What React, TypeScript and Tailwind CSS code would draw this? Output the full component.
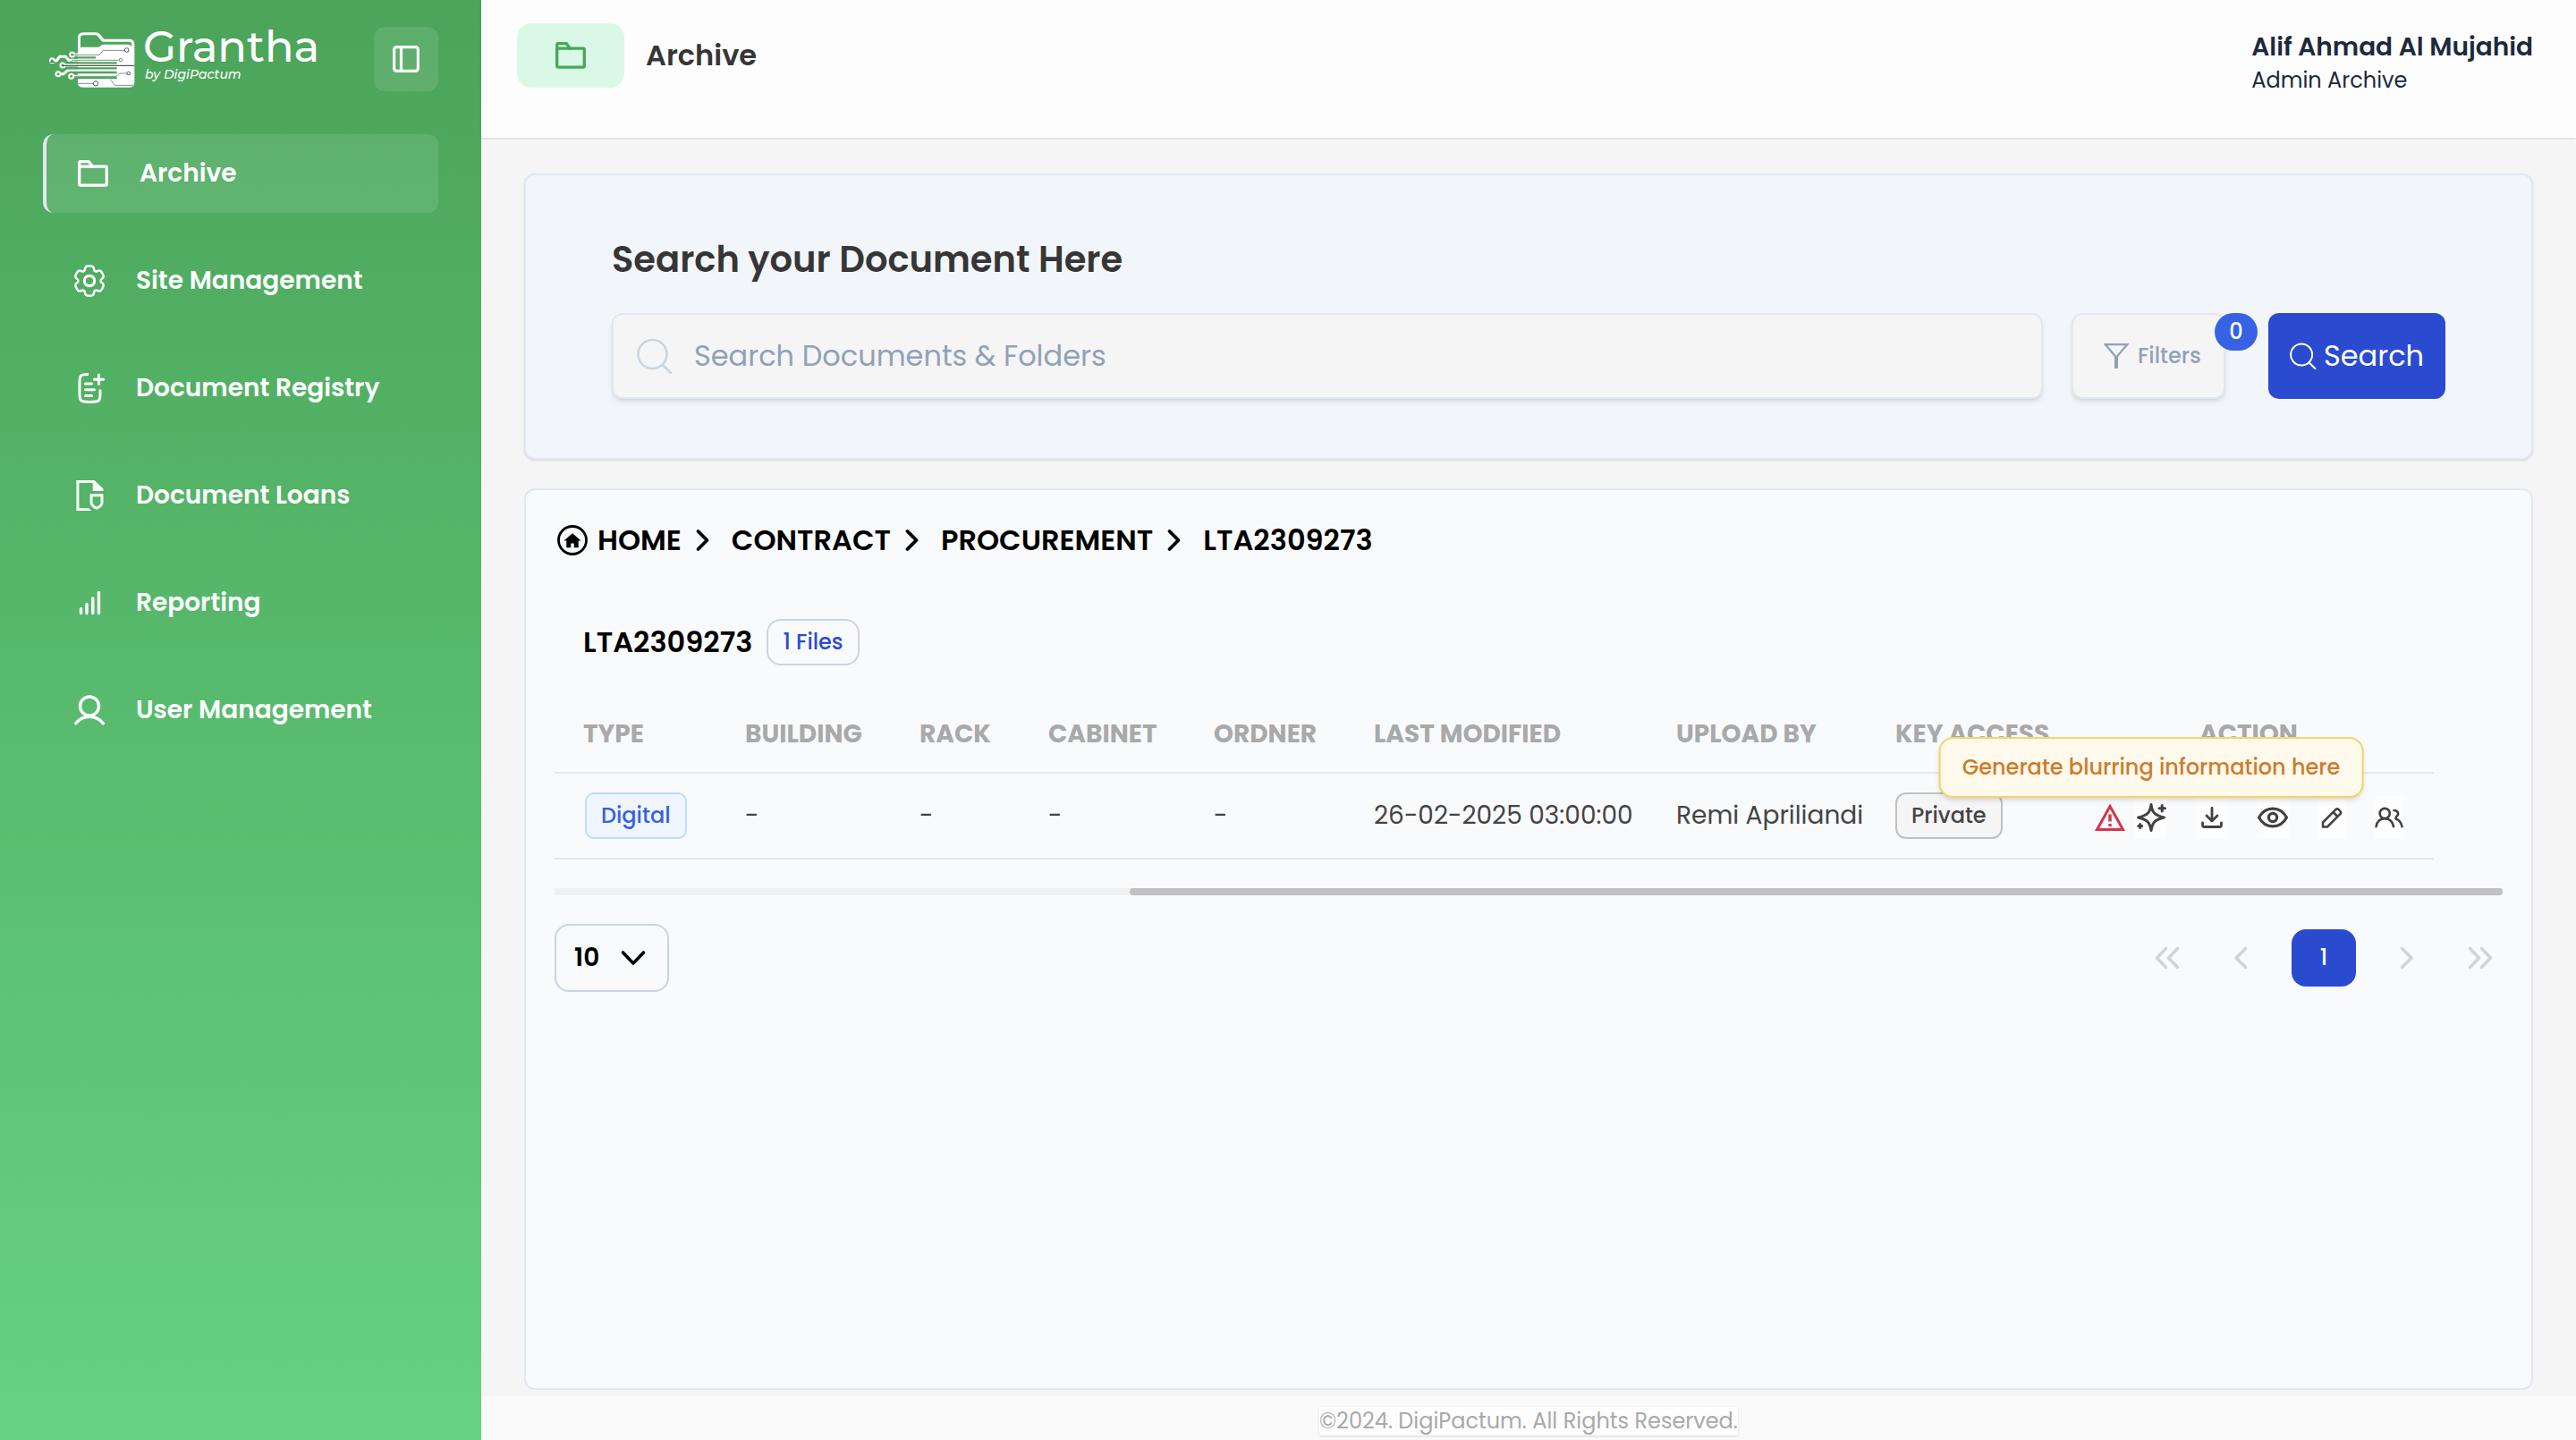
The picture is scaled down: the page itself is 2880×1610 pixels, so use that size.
import type { ReactNode } from "react";

type IconProps = { children: ReactNode; box: string; className: string; width?: number };

function Icon({ children, box, className, width = 3 }: IconProps) {
  return (
    <svg
      viewBox={box}
      className={className}
      fill="none"
      stroke="currentColor"
      strokeWidth={width}
      strokeLinecap="round"
      strokeLinejoin="round"
      aria-hidden="true"
    >
      {children}
    </svg>
  );
}

function FolderIcon({ className }: { className: string }) {
  return (
    <Icon box="-3 -5 40 40" className={className} width={3.3}>
      <path d="M1.7 8V3.4Q1.7 1.7 3.4 1.7H12.3L16.4 7.2" />
      <rect x="1.7" y="7.2" width="30.6" height="21" rx="1.4" />
    </Icon>
  );
}

const GEAR =
  "M13.7654 2.15224C13.3978 2 12.9319 2 12 2C11.0681 2 10.6022 2 10.2346 2.15224C9.74457 2.35523 9.35522 2.74458 9.15223 3.23463C9.05957 3.45834 9.0233 3.7185 9.00911 4.09799C8.98826 4.65568 8.70226 5.17189 8.21894 5.45093C7.73564 5.72996 7.14559 5.71954 6.65219 5.45876C6.31645 5.2813 6.07301 5.18262 5.83294 5.15102C5.30704 5.08178 4.77518 5.22429 4.35436 5.5472C4.03874 5.78938 3.80577 6.1929 3.33983 6.99993C2.87389 7.80697 2.64092 8.21048 2.58899 8.60491C2.51976 9.1308 2.66227 9.66266 2.98518 10.0835C3.13256 10.2756 3.3397 10.437 3.66119 10.639C4.1338 10.936 4.43789 11.4419 4.43786 12C4.43783 12.5581 4.13375 13.0639 3.66118 13.3608C3.33965 13.5629 3.13248 13.7244 2.98508 13.9165C2.66217 14.3373 2.51966 14.8691 2.5889 15.395C2.64082 15.7894 2.87379 16.193 3.33973 17C3.80568 17.807 4.03865 18.2106 4.35426 18.4527C4.77508 18.7756 5.30694 18.9181 5.83284 18.8489C6.07289 18.8173 6.31632 18.7186 6.65204 18.5412C7.14547 18.2804 7.73556 18.27 8.2189 18.549C8.70224 18.8281 8.98826 19.3443 9.00911 19.9021C9.02331 20.2815 9.05957 20.5417 9.15223 20.7654C9.35522 21.2554 9.74457 21.6448 10.2346 21.8478C10.6022 22 11.0681 22 12 22C12.9319 22 13.3978 22 13.7654 21.8478C14.2554 21.6448 14.6448 21.2554 14.8477 20.7654C14.9404 20.5417 14.9767 20.2815 14.9909 19.902C15.0117 19.3443 15.2977 18.8281 15.781 18.549C16.2643 18.2699 16.8544 18.2804 17.3479 18.5412C17.6836 18.7186 17.927 18.8172 18.167 18.8488C18.6929 18.9181 19.2248 18.7756 19.6456 18.4527C19.9612 18.2105 20.1942 17.807 20.6601 16.9999C21.1261 16.1929 21.3591 15.7894 21.411 15.395C21.4802 14.8691 21.3377 14.3372 21.0148 13.9164C20.8674 13.7243 20.6602 13.5628 20.3387 13.3608C19.8662 13.0639 19.5621 12.558 19.5621 11.9999C19.5621 11.4418 19.8662 10.9361 20.3387 10.6392C20.6603 10.4371 20.8675 10.2757 21.0149 10.0835C21.3378 9.66273 21.4803 9.13087 21.4111 8.60497C21.3592 8.21055 21.1262 7.80703 20.6602 7C20.1943 6.19297 19.9613 5.78945 19.6457 5.54727C19.2249 5.22436 18.693 5.08185 18.1671 5.15109C17.9271 5.18269 17.6837 5.28136 17.3479 5.4588C16.8545 5.71959 16.2644 5.73002 15.7811 5.45096C15.2977 5.17191 15.0117 4.65566 14.9909 4.09794C14.9767 3.71848 14.9404 3.45833 14.8477 3.23463C14.6448 2.74458 14.2554 2.35523 13.7654 2.15224Z";

function Logo() {
  return (
    <svg viewBox="0 0 330 225" className="h-[75px] w-[110px] shrink-0" fill="none" aria-hidden="true">
      <path
        fillRule="evenodd"
        fill="#fff"
        d="M111 90V40Q111 22 129 22H172Q180 22 185 28L199 44H284Q301 44 301 61V190Q301 206 285 206H127Q111 206 111 190ZM120 73L124 71H178Q184 71 188 67L192 63Q194 62 200 62H282L292 68V62Q292 53 282 53H196Q192 53 189 49L177 34Q175 31 170 31H130Q120 31 120 41Z"
      />
      <g stroke="#fff" strokeWidth="9">
        <path d="M92 96H116M30 116H40L50 103H70L80 115H116M60 132H116M45 161H63L77 149H116M89 169H116" />
      </g>
      <g stroke="#4ca65c" strokeWidth="7">
        <path d="M98 106H172M108 124H242M70 142H242M82 156H242M100 174H242" />
      </g>
      <g stroke="#fff" strokeWidth="6" fill="#4ca65c">
        <circle cx="92" cy="96" r="7.5" />
        <circle cx="25" cy="116" r="7.5" />
        <circle cx="60" cy="132" r="7.5" />
        <circle cx="45" cy="161" r="7.5" />
        <circle cx="89" cy="169" r="7.5" />
      </g>
      <g stroke="#8b8b8b" strokeWidth="3">
        <path d="M90 97H183L196 82H267M88 119L92 115H248M100 169H240L252 159H275M112 193H163M222 181L235 199H298" />
        <circle cx="275" cy="81" r="7" stroke="#555" />
        <circle cx="255" cy="114" r="5.5" />
        <circle cx="281" cy="159" r="5.5" stroke="#555" />
        <circle cx="171" cy="193" r="8" stroke="#555" />
      </g>
      <path d="M60 133H301M17 121H33" stroke="#333" strokeWidth="3" />
    </svg>
  );
}

const NAV: { label: string; icon: ReactNode; active?: boolean }[] = [
  { label: "Archive", active: true, icon: <FolderIcon className="size-10" /> },
  {
    label: "Site Management",
    icon: (
      <Icon box="0 0 24 24" className="size-10" width={1.5}>
        <circle cx="12" cy="12" r="3.4" strokeWidth="1.9" />
        <path d={GEAR} />
      </Icon>
    ),
  },
  {
    label: "Document Registry",
    icon: (
      <Icon box="0 0 40 40" className="size-10" width={3}>
        <path strokeLinecap="butt" d="M19 4.5C10.5 4.5 9 5.5 9 13V27C9 34.5 10.5 35.5 20.5 35.5S32 34.5 32 27V21.5" />
        <path d="M15.5 15H22.5M15.5 21.7H25.5M15.5 28.5H22.5M30.5 5V15.5M25.5 10.2H35.5" />
      </Icon>
    ),
  },
  {
    label: "Document Loans",
    icon: (
      <Icon box="0 0 40 40" className="size-10" width={3}>
        <g strokeLinecap="butt" strokeLinejoin="miter">
          <path d="M24 4.5H6.900V35.5H19.5" />
          <path d="M18 34L22.5 37H18Z" fill="currentColor" stroke="none" />
          <path d="M23.7 3H25.5L35.5 12.5V15H23.7Z" fill="currentColor" stroke="none" />
          <path d="M22.1 19.8H34V28Q34 31.5 28 34.2Q22.1 31.5 22.1 28Z" />
        </g>
      </Icon>
    ),
  },
  {
    label: "Reporting",
    icon: (
      <Icon box="0 0 40 40" className="size-10" width={3.4}>
        <path d="M10.5 26.8V31.5M17 21.5V31.5M23.8 15V31.5M30.5 8.5V31.5" />
      </Icon>
    ),
  },
  {
    label: "User Management",
    icon: (
      <Icon box="0 0 40 40" className="size-10" width={3.4}>
        <circle cx="20" cy="15.5" r="10.5" />
        <path d="M4.6 34.8Q11 27.3 20 27.3T35.4 34.8" />
      </Icon>
    ),
  },
];

function Sidebar() {
  return (
    <aside className="flex w-[538px] shrink-0 flex-col bg-linear-to-b from-[#4ba45a] to-[#66d283] text-white">
      <div className="flex h-[104px] items-center pt-7 pr-12 pl-[50px]">
        <Logo />
        <div className="self-start font-[Montserrat,Poppins,sans-serif]">
          <div className="text-[48px] leading-[48px] font-medium">Grantha</div>
          <div className="pl-[2px] text-[14px] leading-[14px] font-medium italic">by DigiPactum</div>
        </div>
        <button type="button" aria-label="Toggle sidebar" className="ml-auto flex size-[72px] items-center justify-center rounded-xl bg-white/10">
          <Icon box="0 0 30 30" className="size-[30px]" width={3.2}>
            <rect x="1.6" y="1.6" width="26.8" height="26.8" rx="3" />
            <path d="M9.5 2V28" />
          </Icon>
        </button>
      </div>
      <nav className="mt-[46px] flex flex-col gap-8 px-12">
        {NAV.map((n) => (
          <a
            key={n.label}
            href="#"
            aria-current={n.active ? "page" : undefined}
            className={
              n.active
                ? "flex h-[88px] items-center gap-8 rounded-xl border-l-4 border-slate-200 bg-white/10 pl-8 text-[28px] font-semibold"
                : "flex h-[88px] items-center gap-8 rounded-xl pl-8 text-[28px] font-semibold"
            }
          >
            {n.icon}
            {n.label}
          </a>
        ))}
      </nav>
    </aside>
  );
}

function SearchIcon({ className, width }: { className: string; width: number }) {
  return (
    <Icon box="0 0 40 40" className={className} width={width}>
      <circle cx="17.5" cy="18" r="16" />
      <path d="M29 30L38 39" />
    </Icon>
  );
}

function SearchPanel() {
  return (
    <section className="rounded-xl border-2 border-slate-200 bg-[#f2f5fa] px-24 pt-16 pb-[66px] shadow-sm">
      <h2 className="mb-[30px] text-[40px] leading-[60px] font-semibold text-[#363636]">Search your Document Here</h2>
      <form className="flex h-24">
        <label className="flex flex-1 items-center gap-6 rounded-xl border-2 border-slate-200 bg-[#f5f5f5] pl-[26px] shadow-md">
          <SearchIcon className="size-10 shrink-0 text-slate-300" width={2.6} />
          <input
            type="text"
            aria-label="Search Documents & Folders"
            placeholder="Search Documents & Folders"
            className="min-w-0 flex-1 bg-transparent text-[32px] outline-none placeholder:text-slate-400"
          />
        </label>
        <button
          type="button"
          className="relative ml-8 flex w-[172px] items-center gap-[10px] rounded-xl border-2 border-slate-200 bg-[#f5f5f5] pl-[34px] text-2xl font-medium text-slate-400 shadow-md"
        >
          <svg viewBox="0 0 28 28" className="size-7" fill="none" stroke="currentColor" aria-hidden="true">
            <path d="M1.8 1.2H26.2L14 15.5Z" strokeWidth="2.2" />
            <path d="M14 14V28" strokeWidth="4" />
          </svg>
          Filters
          <span className="absolute -top-[2px] -right-[38px] flex h-[42px] w-[48px] items-center justify-center rounded-full bg-[#3762e3] text-2xl font-medium text-white">
            0
          </span>
        </button>
        <button
          type="submit"
          className="ml-12 flex w-[198px] items-center justify-center gap-2 rounded-xl bg-[#2a4bd0] text-[32px] text-white"
        >
          <SearchIcon className="size-[30px]" width={2.6} />
          Search
        </button>
      </form>
    </section>
  );
}

function Breadcrumb() {
  return (
    <nav aria-label="Breadcrumb">
      <ol className="flex items-center text-[32px] leading-[48px] font-semibold text-black">
        {["HOME", "CONTRACT", "PROCUREMENT", "LTA2309273"].map((label, i) => (
          <li key={label} className="flex items-center">
            {i === 0 ? (
              <svg viewBox="-20 -20 40 40" className="mr-2 size-10" aria-hidden="true">
                <circle r="15.5" fill="none" stroke="currentColor" strokeWidth="2.8" />
                <path d="M0 -7.7L9.5 0.5H6.7V8.3H1.8V3.5H-1.8V8.3H-6.7V0.5H-9.5Z" fill="currentColor" />
              </svg>
            ) : (
              <Icon box="0 0 32 32" className="mr-4 ml-2 size-8" width={3.8}>
                <path d="M10.5 6L20.5 16L10.5 26" />
              </Icon>
            )}
            <a href="#">{label}</a>
          </li>
        ))}
      </ol>
    </nav>
  );
}

const COLUMNS: [string, string][] = [
  ["TYPE", "w-[181px]"],
  ["BUILDING", "w-[195px]"],
  ["RACK", "w-[144px]"],
  ["CABINET", "w-[185px]"],
  ["ORDNER", "w-[179px]"],
  ["LAST MODIFIED", "w-[338px]"],
  ["UPLOAD BY", "w-[245px]"],
  ["KEY ACCESS", "w-[220px]"],
];

function IconButton({ label, wide, children }: { label: string; wide?: boolean; children: ReactNode }) {
  return (
    <button
      type="button"
      aria-label={label}
      className={wide ? "flex h-12 w-9 items-center justify-center bg-[#fdfdfd]" : "flex h-12 w-8 items-center justify-center bg-[#fdfdfd]"}
    >
      {children}
    </button>
  );
}

function RowActions() {
  return (
    <div className="flex items-center justify-center gap-8 pt-1 text-[#424242]">
      <div className="flex items-center gap-[10px]">
        <svg viewBox="0 0 36 36" className="size-9 text-[#d5344b]" fill="none" stroke="currentColor" strokeWidth="3" aria-hidden="true">
          <path d="M18 5.5L32.5 31.5H3.5Z" />
          <path d="M18 14.5V22.5M18 25V28" strokeWidth="3.4" />
        </svg>
        <div className="relative flex">
          <IconButton label="Generate blurring information" wide>
            <Icon box="0 0 36 36" className="size-9" width={3}>
              <path d="M18 3.5C19 12 21.5 15.5 32.5 18C21.5 20.5 19.5 24 18 32.5C16.5 24 14.5 20.5 3.5 18C14.5 15.5 17 12 18 3.5Z" />
              <path d="M30.2 4.5V11M27 7.7H33.5M5.7 25.5V29.5M3.7 27.5H7.7" />
            </Icon>
          </IconButton>
          <div
            role="tooltip"
            className="absolute bottom-[46px] left-1/2 -translate-x-1/2 rounded-2xl border-2 border-[#f5d565] bg-[#fffaeb] px-6 py-[14px] text-2xl leading-9 font-medium whitespace-nowrap text-[#cd7c2c] shadow-md"
          >
            Generate blurring information here
          </div>
        </div>
      </div>
      <IconButton label="Download" wide>
        <Icon box="-18 -18 36 36" className="size-9" width={2.8}>
          <path d="M0 -10.5V3.5M-6 -2L0 4L6 -2M-10.5 6V8.5Q-10.5 10.5 -8.5 10.5H8.5Q10.5 10.5 10.5 8.5V6" />
        </Icon>
      </IconButton>
      <IconButton label="Preview" wide>
        <Icon box="-18 -18 36 36" className="size-9" width={3.2}>
          <path d="M-15.5 0C-12 -6.5 -6.5 -9.8 0 -9.8S12 -6.5 15.5 0C12 6.5 6.5 9.8 0 9.8S-12 6.5 -15.5 0Z" />
          <circle r="4.6" />
        </Icon>
      </IconButton>
      <IconButton label="Edit">
        <Icon box="-16 -16 32 32" className="size-8" width={2.5}>
          <path d="M-10 10.5V5.5L4.3 -8.8Q6 -10.5 7.7 -8.8L9.3 -7.2Q11 -5.5 9.3 -3.8L-5 10.5ZM1.5 -6L6.5 -1" />
        </Icon>
      </IconButton>
      <IconButton label="Share">
        <Icon box="-16 -16 32 32" className="size-8" width={2.6}>
          <circle cx="-4.8" cy="-4.5" r="5.6" />
          <path d="M-14.5 10.2C-13.5 4.5 -10 1.2 -4.8 1.2S4 4.5 5 10.2M5.5 -8C10.5 -8 11.5 -3 8 -0.8L7.5 1.5C11.5 2.5 13.5 5.5 14.5 10.2" />
        </Icon>
      </IconButton>
    </div>
  );
}

function FilesTable() {
  return (
    <div className="mt-[29px]">
      <table className="w-[2101px] table-fixed border-separate border-spacing-0 text-left text-[28px] leading-[42px] text-[#444]">
        <thead>
          <tr className="text-[#a9a9a9] [&>th]:border-b-2 [&>th]:border-slate-200 [&>th]:pt-[27px] [&>th]:pb-[21px] [&>th]:font-bold [&>th]:whitespace-nowrap">
            {COLUMNS.map(([label, width]) => (
              <th key={label} scope="col" className={`${width} pl-8`}>
                {label}
              </th>
            ))}
            <th scope="col" className="text-center">
              ACTION
            </th>
          </tr>
        </thead>
        <tbody>
          <tr className="h-24 [&>td]:border-b-2 [&>td]:border-slate-200 [&>td]:pl-8 [&>td]:whitespace-nowrap">
            <td>
              <span className="ml-[2px] inline-flex h-[52px] items-center rounded-[10px] border-2 border-blue-200 bg-blue-50 px-4 align-middle text-2xl font-medium text-[#3560e4]">
                Digital
              </span>
            </td>
            <td>-</td>
            <td>-</td>
            <td>-</td>
            <td>-</td>
            <td>26-02-2025 03:00:00</td>
            <td>Remi Apriliandi</td>
            <td>
              <span className="inline-flex h-[52px] items-center rounded-xl border-2 border-[#c0c0c0] bg-[#f5f5f5] px-4 align-middle text-2xl font-medium">
                Private
              </span>
            </td>
            <td className="pl-0!">
              <RowActions />
            </td>
          </tr>
        </tbody>
      </table>
      <div className="mt-8 flex h-2 justify-end bg-[#f1f1f1]">
        <div className="w-[70.5%] rounded-full bg-[#c1c1c1]" />
      </div>
    </div>
  );
}

function PageArrow({ label, d }: { label: string; d: string }) {
  return (
    <button type="button" aria-label={label} className="flex h-16 w-[50px] items-center justify-center text-[#cfd4dc]">
      <Icon box="-16 -16 32 32" className="size-8" width={3.6}>
        <path d={d} />
      </Icon>
    </button>
  );
}

function Pagination() {
  return (
    <div className="mt-8 flex items-center justify-between">
      <div className="relative">
        <select
          aria-label="Rows per page"
          defaultValue="10"
          className="h-[76px] w-32 appearance-none rounded-2xl border-2 border-slate-300 bg-transparent pl-5 text-[28px] font-semibold text-black"
        >
          <option>10</option>
          <option>25</option>
          <option>50</option>
        </select>
        <Icon box="-16 -16 32 32" className="pointer-events-none absolute top-1/2 right-6 size-8 -translate-y-1/2 text-black" width={3.6}>
          <path d="M-11.5 -6L0 6L11.5 -6" />
        </Icon>
      </div>
      <div className="flex items-center gap-8">
        <PageArrow label="First page" d="M-1.5 -10.5L-11.5 0L-1.5 10.5M11.5 -10.5L1.5 0L11.5 10.5" />
        <PageArrow label="Previous page" d="M5.5 -10.5L-5 0L5.5 10.5" />
        <button type="button" aria-current="page" className="h-16 w-[72px] rounded-2xl bg-[#2a4bd0] text-2xl font-medium text-white">
          1
        </button>
        <PageArrow label="Next page" d="M-5.5 -10.5L5 0L-5.5 10.5" />
        <PageArrow label="Last page" d="M1.5 -10.5L11.5 0L1.5 10.5M-11.5 -10.5L-1.5 0L-11.5 10.5" />
      </div>
    </div>
  );
}

export default function App() {
  return (
    <div className="flex min-h-screen bg-[#f5f5f5] font-[Poppins,sans-serif]">
      <Sidebar />
      <div className="flex min-w-0 flex-1 flex-col">
        <header className="flex h-[154px] items-start justify-between bg-[#fdfdfd] pt-[26px] pr-12 pl-10 shadow-sm">
          <div className="flex items-center gap-6">
            <span className="flex h-[72px] w-[120px] items-center justify-center rounded-2xl bg-[#daf8e6] text-[#4ba55b]">
              <FolderIcon className="size-10" />
            </span>
            <h1 className="text-[32px] font-semibold text-[#363636]">Archive</h1>
          </div>
          <div className="pt-[6px] text-slate-800">
            <div className="text-[28px] leading-[42px] font-semibold">Alif Ahmad Al Mujahid</div>
            <div className="text-2xl">Admin Archive</div>
          </div>
        </header>
        <main className="flex flex-1 flex-col gap-8 px-12 pt-10 pb-[7px]">
          <SearchPanel />
          <section className="flex-1 rounded-xl border-2 border-slate-200 bg-[#f9fafc] p-8">
            <Breadcrumb />
            <div className="mt-16 flex items-center gap-4 pl-8">
              <h2 className="text-[32px] leading-[48px] font-semibold text-black">LTA2309273</h2>
              <span className="flex h-[52px] items-center rounded-2xl border-2 border-slate-300 px-4 text-2xl font-medium text-[#2a4bd0]">
                1 Files
              </span>
            </div>
            <FilesTable />
            <Pagination />
          </section>
        </main>
        <footer className="flex justify-center bg-[#fafafa] pt-3 pb-[5px]">
          <p className="bg-[#fdfdfd] text-2xl text-[#a9a9a9] shadow-sm">©2024. DigiPactum. All Rights Reserved.</p>
        </footer>
      </div>
    </div>
  );
}
